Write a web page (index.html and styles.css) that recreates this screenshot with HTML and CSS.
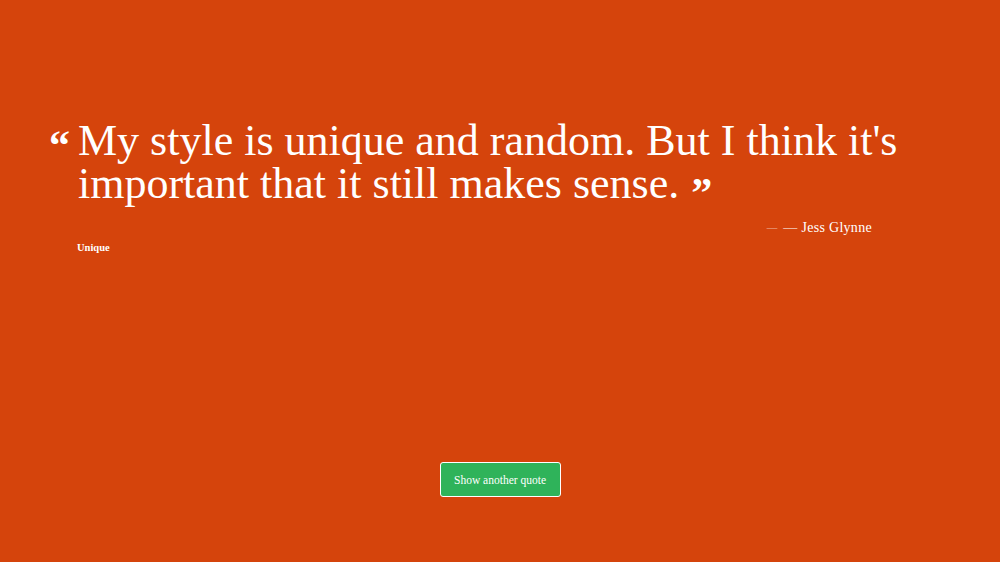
FILE: index.html
```html
<!DOCTYPE html>
<html>
<head>
<meta charset="utf-8">
<link rel="stylesheet" href="styles.css">
</head>
<body>
<main class="page">
  <section class="quote-box">
    <blockquote class="quote">
      <span class="mark open">&ldquo;</span><span class="text">My style is unique and random. But I think it's important that it still makes sense.</span><span class="mark close">&rdquo;</span>
    </blockquote>
    <div class="author"><span class="dash">&mdash;</span> &mdash; Jess Glynne</div>
    <div class="tag">Unique</div>
  </section>
  <div class="actions">
    <button class="btn">Show another quote</button>
  </div>
</main>
</body>
</html>
```
FILE: styles.css
```css
html, body {
  margin: 0;
  padding: 0;
  height: 100%;
}
body {
  background: #d5440c;
  color: #ffffff;
  font-family: "Liberation Serif", "DejaVu Serif", serif;
}
.page {
  height: 562px;
  display: flex;
  flex-direction: column;
}
.quote-box {
  width: 880px;
  margin-left: 50px;
  padding-top: 119px;
}
.quote {
  margin: 0;
  position: relative;
  padding-left: 28px;
  font-size: 44px;
  line-height: 43px;
}
.mark {
  font-weight: bold;
  font-size: 42px;
  line-height: 30px;
}
.open {
  position: absolute;
  left: -1px;
  top: 11px;
}
.close {
  display: inline-block;
  margin-left: 12px;
  position: relative;
  top: 9px;
}
.author {
  text-align: right;
  font-size: 14px;
  margin-top: 15px;
  padding-right: 58px;
  letter-spacing: 0.3px;
}
.dash {
  opacity: 0.6;
  display: inline-block;
  transform: scaleX(0.75);
}
.tag {
  margin-left: 27px;
  font-size: 10.5px;
  font-weight: bold;
  margin-top: 6px;
}
.actions {
  display: flex;
  justify-content: center;
  margin-top: auto;
  margin-bottom: 65px;
}
.btn {
  width: 121px;
  height: 35px;
  background: #2fb35a;
  color: #ffffff;
  border: 1px solid #ffffff;
  border-radius: 3px;
  font-family: "Liberation Serif", "DejaVu Serif", serif;
  font-size: 11.5px;
  padding: 0;
}
```
